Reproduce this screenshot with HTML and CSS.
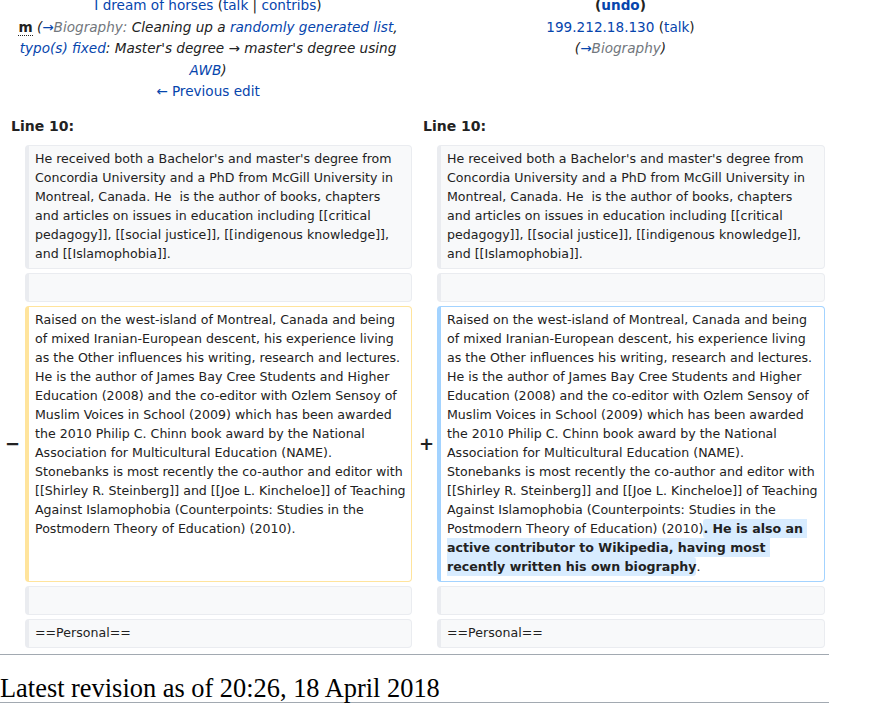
FILE: index.html
```html
<!DOCTYPE html>
<html lang="en">
<head>
<meta charset="utf-8">
<title>Difference between revisions</title>
<link rel="stylesheet" href="styles.css">
</head>
<body>
<div class="page">
  <div class="diff">
    <div class="title">
      <div class="tline"><a href="#">I dream of horses</a> (<a href="#">talk</a> | <a href="#">contribs</a>)</div>
      <div class="tline"><abbr class="minor" title="This is a minor edit">m</abbr> <span class="comment">(<a href="#">→</a><span class="auto">Biography:</span> Cleaning up a <a href="#">randomly generated list</a>, <a href="#">typo(s) fixed</a>: Master's degree → master's degree using <a href="#">AWB</a>)</span></div>
      <div class="tline"><a href="#">← Previous edit</a></div>
    </div>
    <div class="title">
      <div class="tline bold">(<a href="#">undo</a>)</div>
      <div class="tline"><a href="#">199.212.18.130</a> (<a href="#">talk</a>)</div>
      <div class="tline"><span class="comment">(<a href="#">→</a><span class="auto">Biography</span>)</span></div>
    </div>

    <div class="lineno">Line 10:</div>
    <div class="lineno">Line 10:</div>

    <div class="marker"></div>
    <div class="cell context"><div>He received both a Bachelor's and master's degree from Concordia University and a PhD from McGill University in Montreal, Canada. He  is the author of books, chapters and articles on issues in education including [[critical pedagogy]], [[social justice]], [[indigenous knowledge]], and [[Islamophobia]].</div></div>
    <div class="marker"></div>
    <div class="cell context"><div>He received both a Bachelor's and master's degree from Concordia University and a PhD from McGill University in Montreal, Canada. He  is the author of books, chapters and articles on issues in education including [[critical pedagogy]], [[social justice]], [[indigenous knowledge]], and [[Islamophobia]].</div></div>

    <div class="marker"></div>
    <div class="cell context"><br></div>
    <div class="marker"></div>
    <div class="cell context"><br></div>

    <div class="marker minus">−</div>
    <div class="cell deleted"><div>Raised on the west-island of Montreal, Canada and being of mixed Iranian-European descent, his experience living as the Other influences his writing, research and lectures. He is the author of James Bay Cree Students and Higher Education (2008) and the co-editor with Ozlem Sensoy of Muslim Voices in School (2009) which has been awarded the 2010 Philip C. Chinn book award by the National Association for Multicultural Education (NAME). Stonebanks is most recently the co-author and editor with [[Shirley R. Steinberg]] and [[Joe L. Kincheloe]] of Teaching Against Islamophobia (Counterpoints: Studies in the Postmodern Theory of Education) (2010).</div></div>
    <div class="marker plus">+</div>
    <div class="cell added"><div>Raised on the west-island of Montreal, Canada and being of mixed Iranian-European descent, his experience living as the Other influences his writing, research and lectures. He is the author of James Bay Cree Students and Higher Education (2008) and the co-editor with Ozlem Sensoy of Muslim Voices in School (2009) which has been awarded the 2010 Philip C. Chinn book award by the National Association for Multicultural Education (NAME). Stonebanks is most recently the co-author and editor with [[Shirley R. Steinberg]] and [[Joe L. Kincheloe]] of Teaching Against Islamophobia (Counterpoints: Studies in the Postmodern Theory of Education) (2010)<ins class="change">. He is also an active contributor to Wikipedia, having most recently written his own biography</ins>.</div></div>

    <div class="marker"></div>
    <div class="cell context"><br></div>
    <div class="marker"></div>
    <div class="cell context"><br></div>

    <div class="marker"></div>
    <div class="cell context"><div>==Personal==</div></div>
    <div class="marker"></div>
    <div class="cell context"><div>==Personal==</div></div>
  </div>
  <hr class="diff-hr">
  <h2 class="current">Latest revision as of 20:26, 18 April 2018</h2>
</div>
</body>
</html>
```

FILE: styles.css
```css
html, body {
  margin: 0;
  padding: 0;
  background: #ffffff;
  overflow: hidden;
}

body {
  font-family: "DejaVu Sans", sans-serif;
  color: #222222;
}

a {
  color: #0645ad;
  text-decoration: none;
}

.page {
  width: 829px;
  margin-top: -5px;
}

.diff {
  display: grid;
  grid-template-columns: 17px 387px 17px 388px;
  gap: 4px;
  padding: 0 4px;
}

.title {
  grid-column: span 2;
  text-align: center;
  font-size: 13.6px;
  line-height: 21.6px;
}

.tline.bold {
  font-weight: bold;
}

.minor {
  font-weight: bold;
  text-decoration: none;
  border-bottom: 1px dotted #222222;
  cursor: help;
}

.comment {
  font-style: italic;
}

.auto {
  color: #72777d;
}

.lineno {
  grid-column: span 2;
  font-weight: bold;
  font-size: 14px;
  line-height: 19px;
  padding: 10px 7px 5px;
}

.marker {
  font-weight: bold;
  font-size: 18px;
  line-height: 19px;
  text-align: right;
  align-self: center;
}

.minus {
  padding-right: 1px;
}

.plus {
  margin-right: -1px;
}

.cell {
  font-size: 12.6px;
  line-height: 19px;
  padding: 3px 5px 5px 6px;
  border: 1px solid #eaecf0;
  border-left-width: 4px;
  border-radius: 4px;
  white-space: pre-wrap;
  overflow-wrap: break-word;
}

.context {
  background: #f8f9fa;
  color: #222222;
}

.deleted {
  border-color: #ffe49c;
  background: #ffffff;
}

.added {
  border-color: #a3d3ff;
  background: #ffffff;
}

.change {
  font-weight: bold;
  text-decoration: none;
  background: #d8ecff;
  padding: 2px 0;
  border-radius: 3px;
}

.diff-hr {
  margin: 6px 0 0;
  border: 0;
  height: 1px;
  background: #a2a9b1;
}

.current {
  margin: 20px 0 0;
  font-family: "Liberation Serif", serif;
  font-weight: normal;
  font-size: 26.4px;
  line-height: 27px;
  border-bottom: 1px solid #a2a9b1;
  color: #000000;
}
```
